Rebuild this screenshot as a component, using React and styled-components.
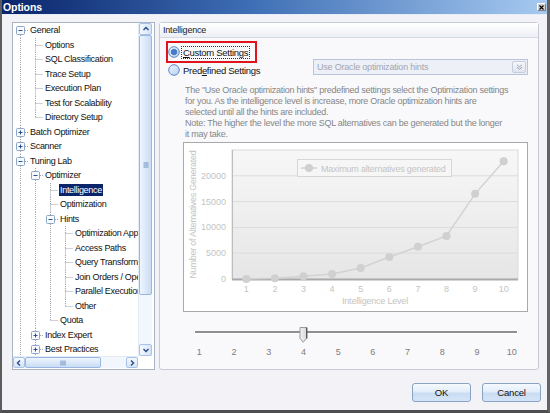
import React from 'react';
import styled, { createGlobalStyle } from 'styled-components';

const GlobalStyle = createGlobalStyle`
  html, body { margin: 0; padding: 0; background: #ffffff; }
  body { font-family: "Liberation Sans", Arial, sans-serif; font-size: 9px; }
  * { box-sizing: border-box; }
`;

const Window = styled.div`
  width: 550px;
  height: 413px;
  display: flex;
  flex-direction: column;
  background: #f3f3f7;
  border-left: 2px solid #5c5c5c;
  border-right: 3px solid #626262;
  border-bottom: 3px solid #4e4e4e;
  overflow: hidden;
`;

const TitleBar = styled.div`
  height: 15px;
  flex: none;
  display: flex;
  align-items: center;
  padding-left: 1px;
  background: linear-gradient(to right, #0a246a 0%, #3d6db4 45%, #a6caf0 100%);
  border-bottom: 1px solid #e8eef8;
`;

const TitleText = styled.span`
  color: #ffffff;
  font-weight: bold;
  font-size: 10.5px;
  letter-spacing: -0.1px;
`;

const CloseBox = styled.div`
  margin-left: auto;
  margin-right: 1px;
  width: 9px;
  height: 8px;
  background: #d4d0c8;
  border: 1px solid #808080;
  border-top-color: #ffffff;
  border-left-color: #ffffff;
  display: flex;
  align-items: center;
  justify-content: center;
`;

const Body = styled.div`
  display: flex;
  gap: 4px;
  padding: 7px 0 0 10px;
`;

const TreePanel = styled.div`
  width: 143px;
  height: 348px;
  border: 1px solid #a9b4c4;
  background: #ffffff;
  display: grid;
  grid-template-columns: 125px 14px;
  grid-template-rows: 333px 12px;
`;

const TreeArea = styled.div`
  overflow: hidden;
  padding-top: 0;
`;

const Row = styled.div`
  height: 14.5px;
  display: flex;
  align-items: center;
  white-space: nowrap;
`;

const Cell = styled.svg`
  flex: none;
  display: block;
`;

const NodeLabel = styled.span`
  margin-left: 1px;
  padding: 0 1px;
  line-height: 12px;
  font-size: 9px;
  letter-spacing: -0.3px;
  color: ${p => (p.$selected ? '#ffffff' : '#111111')};
  background: ${p => (p.$selected ? '#0a246a' : 'transparent')};
`;

const VScroll = styled.div`
  display: flex;
  flex-direction: column;
  background: #f2f7fd;
  border-left: 1px solid #e2ebf6;
`;

const HScroll = styled.div`
  display: flex;
  background: #f2f7fd;
  border-top: 1px solid #e2ebf6;
`;

const ArrowBtn = styled.div`
  flex: none;
  width: ${p => (p.$horizontal ? '12px' : '100%')};
  height: ${p => (p.$horizontal ? '100%' : '12px')};
  display: flex;
  align-items: center;
  justify-content: center;
  border: 1px solid #a9c3e6;
  border-radius: 2px;
  background: linear-gradient(${p => (p.$horizontal ? '180deg' : '90deg')}, #f4f9ff, #d3e4f8);
`;

const Track = styled.div`
  flex: 1;
  display: flex;
  flex-direction: ${p => (p.$horizontal ? 'row' : 'column')};
`;

const Thumb = styled.div`
  flex: none;
  display: flex;
  align-items: center;
  justify-content: center;
  border: 1px solid #9ab8df;
  border-radius: 2px;
  background: linear-gradient(${p => (p.$horizontal ? '180deg' : '90deg')}, #eef5fd, #c9ddf5);
`;

const Corner = styled.div`
  background: #ffffff;
`;

const RightPanel = styled.div`
  width: 380px;
  height: 348px;
  border: 1px solid #c6cbd7;
  border-radius: 3px;
  background: #f9f9fc;
  display: flex;
  flex-direction: column;
`;

const PanelHeader = styled.div`
  height: 15px;
  flex: none;
  padding-left: 3px;
  display: flex;
  align-items: center;
  font-size: 9px;
  letter-spacing: -0.2px;
  color: #222;
  background: linear-gradient(#ffffff, #eceff5);
  border-bottom: 1px solid #d6dae3;
`;

const OptionsRow = styled.div`
  display: flex;
  align-items: flex-start;
`;

const RadioColumn = styled.div`
  display: flex;
  flex-direction: column;
`;

const HighlightBox = styled.div`
  margin: 3px 0 0 6px;
  width: 91px;
  height: 22px;
  border: 2px solid #e0141c;
  display: flex;
  align-items: center;
`;

const RadioRow = styled.div`
  display: flex;
  align-items: center;
  height: 14px;
  margin-left: ${p => p.$indent || 0}px;
`;

const RadioLabel = styled.span`
  margin-left: 1px;
  padding: 0 1px;
  line-height: 11px;
  font-size: 9.5px;
  letter-spacing: -0.3px;
  color: #111;
  border: 1px dotted ${p => (p.$focus ? '#333' : 'transparent')};
  u { text-decoration: underline; }
`;

const Dropdown = styled.div`
  margin: 21px 10px 0 auto;
  width: 215px;
  height: 16px;
  border: 1px solid #b9c4db;
  background: #edf0f7;
  display: flex;
  align-items: center;
  padding-left: 3px;
  color: #a2a6b0;
  font-size: 9px;
  letter-spacing: -0.2px;
`;

const DropButton = styled.div`
  margin-left: auto;
  margin-right: 1px;
  width: 14px;
  height: 12px;
  border: 1px solid #c5cddd;
  border-radius: 2px;
  background: linear-gradient(#f6f7fb, #dfe4ee);
  display: flex;
  align-items: center;
  justify-content: center;
`;

const Description = styled.p`
  margin: 8px 0 0 25px;
  font-size: 9px;
  line-height: 11px;
  letter-spacing: -0.27px;
  color: #868686;
  white-space: nowrap;
`;

const ChartBox = styled.div`
  margin: 2px 0 0 23px;
  width: 345px;
  height: 170px;
  border: 1px solid #a9a9a9;
  background: #ffffff;
  flex: none;
`;

const SliderArea = styled.div`
  margin: 19px 0 0 35px;
  width: 322px;
  height: 3px;
  position: relative;
  border-top: 2px solid #8f8f8f;
  border-bottom: 1px solid #ffffff;
`;

const SliderThumb = styled.svg`
  position: absolute;
  top: -6px;
`;

const TickLabels = styled.div`
  margin: 13px 0 0 22px;
  width: 347px;
  display: grid;
  grid-template-columns: repeat(10, 1fr);
  font-size: 9px;
  line-height: 10px;
  color: #7c7c7c;
  text-align: center;
`;

const Footer = styled.div`
  display: flex;
  justify-content: flex-end;
  gap: 11px;
  padding: 13px 6px 0 0;
`;

const Button = styled.button`
  width: 59px;
  height: 19px;
  border: 1px solid #8aa2c3;
  border-radius: 3px;
  background: linear-gradient(#f6f9fe 0%, #e3edf9 45%, #c9dcf2 55%, #d5e5f7 100%);
  font-family: "Liberation Sans", Arial, sans-serif;
  font-size: 9.5px;
  letter-spacing: -0.2px;
  color: #111;
  padding: 0;
`;

/* ---------- tree ---------- */

const tree = [
  {
    label: 'General', open: true, children: [
      { label: 'Options' }, { label: 'SQL Classification' }, { label: 'Trace Setup' },
      { label: 'Execution Plan' }, { label: 'Test for Scalability' }, { label: 'Directory Setup' },
    ],
  },
  { label: 'Batch Optimizer', closed: true },
  { label: 'Scanner', closed: true },
  {
    label: 'Tuning Lab', open: true, more: true, children: [
      {
        label: 'Optimizer', open: true, children: [
          { label: 'Intelligence', selected: true },
          { label: 'Optimization' },
          {
            label: 'Hints', open: true, children: [
              { label: 'Optimization Approach' }, { label: 'Access Paths' },
              { label: 'Query Transformation' }, { label: 'Join Orders / Operations' },
              { label: 'Parallel Execution' }, { label: 'Other' },
            ],
          },
          { label: 'Quota' },
        ],
      },
      { label: 'Index Expert', closed: true },
      { label: 'Best Practices', closed: true, more: true },
    ],
  },
];

function flatten(nodes, depth = 0, guides = [], out = []) {
  nodes.forEach((n, i) => {
    const hasNext = i < nodes.length - 1 || !!n.more;
    out.push({ ...n, depth, guides, hasNext, first: out.length === 0 });
    if (n.children && n.open) flatten(n.children, depth + 1, [...guides, hasNext], out);
  });
  return out;
}

const LINE = { stroke: '#9ea3ad', strokeWidth: 1, strokeDasharray: '1 1' };

const Guide = ({ on }) => (
  <Cell width="15" height="14.5" viewBox="0 0 15 14.5">
    {on && <line x1="7.5" y1="0" x2="7.5" y2="14.5" {...LINE} />}
  </Cell>
);

const Connector = ({ first, hasNext, expandable, open }) => (
  <Cell width="15" height="14.5" viewBox="0 0 15 14.5">
    {!first && <line x1="7.5" y1="0" x2="7.5" y2={expandable ? 3 : 7.5} {...LINE} />}
    {hasNext && <line x1="7.5" y1={expandable ? 12 : 7.5} x2="7.5" y2="14.5" {...LINE} />}
    <line x1={expandable ? 12 : 7.5} y1="7.5" x2="15" y2="7.5" {...LINE} />
    {expandable && (
      <g>
        <rect x="3.5" y="3.5" width="8" height="8" rx="1" fill="#f7f9fc" stroke="#8ea6c6" />
        <line x1="5.5" y1="7.5" x2="9.5" y2="7.5" stroke="#2c4f8e" />
        {!open && <line x1="7.5" y1="5.5" x2="7.5" y2="9.5" stroke="#2c4f8e" />}
      </g>
    )}
  </Cell>
);

const Chevron = ({ dir }) => {
  const paths = {
    up: 'M1.5 5 L4 2.5 L6.5 5',
    down: 'M1.5 3 L4 5.5 L6.5 3',
    left: 'M5 1.5 L2.5 4 L5 6.5',
    right: 'M3 1.5 L5.5 4 L3 6.5',
  };
  return (
    <svg width="8" height="8" viewBox="0 0 8 8">
      <path d={paths[dir]} fill="none" stroke="#2b4a86" strokeWidth="1.4" />
    </svg>
  );
};

const Grip = ({ horizontal }) => (
  <svg width="6" height="6" viewBox="0 0 6 6">
    {horizontal
      ? [1, 3, 5].map(x => <line key={x} x1={x} y1="0.5" x2={x} y2="5.5" stroke="#6f8fbf" />)
      : [1, 3, 5].map(y => <line key={y} x1="0.5" y1={y} x2="5.5" y2={y} stroke="#6f8fbf" />)}
  </svg>
);

function Tree() {
  const rows = flatten(tree);
  return (
    <TreeArea>
      {rows.map((r, idx) => (
        <Row key={idx}>
          {r.guides.map((g, gi) => <Guide key={gi} on={g} />)}
          <Connector first={r.first} hasNext={r.hasNext} expandable={!!(r.children || r.closed)} open={r.open} />
          <NodeLabel $selected={r.selected}>{r.label}</NodeLabel>
        </Row>
      ))}
    </TreeArea>
  );
}

/* ---------- radio ---------- */

const Radio = ({ checked }) => (
  <svg width="12" height="12" viewBox="0 0 12 12">
    <defs>
      <linearGradient id={checked ? 'rg1' : 'rg2'} x1="0" y1="0" x2="1" y2="1">
        <stop offset="0" stopColor="#eef4fc" />
        <stop offset="1" stopColor="#b7cfee" />
      </linearGradient>
    </defs>
    <circle cx="6" cy="6" r="5.3" fill={`url(#${checked ? 'rg1' : 'rg2'})`} stroke="#5d88c4" strokeWidth="1" />
    {checked && <circle cx="6" cy="6" r="2.8" fill="#3f7cd0" stroke="#2e62ad" strokeWidth="0.6" />}
  </svg>
);

/* ---------- chart ---------- */

function Chart() {
  const L = 48, R = 334, T = 7, B = 136, max = 25000;
  const data = [0, 150, 550, 950, 2150, 4250, 6250, 8350, 16500, 22800];
  const cw = (R - L) / 10;
  const x = i => L + (i + 0.5) * cw;
  const y = v => B - (v / max) * (B - T);
  const ticks = [0, 5000, 10000, 15000, 20000];
  const txt = { fontFamily: '"Liberation Sans", Arial, sans-serif', fontSize: 9, fill: '#c4c4c4' };
  return (
    <svg width="343" height="168" viewBox="0 0 343 168">
      <defs>
        <linearGradient id="plotbg" x1="0" y1="0" x2="0" y2="1">
          <stop offset="0" stopColor="#f7f7f7" />
          <stop offset="1" stopColor="#e6e6e6" />
        </linearGradient>
      </defs>
      <rect x={L} y={T} width={R - L} height={B - T} fill="url(#plotbg)" stroke="#dadada" />
      {ticks.slice(1).map(t => (
        <line key={t} x1={L} y1={y(t)} x2={R} y2={y(t)} stroke="#dcdcdc" />
      ))}
      <line x1={L + 0.5} y1={T} x2={L + 0.5} y2={B} stroke="#bdbdbd" />
      <line x1={L} y1={B + 0.5} x2={R} y2={B + 0.5} stroke="#a9a9a9" strokeWidth="2" />
      {ticks.map(t => (
        <text key={t} x="42" y={y(t) + 3} textAnchor="end" {...txt}>{t}</text>
      ))}
      {data.map((_, i) => (
        <text key={i} x={x(i)} y="149" textAnchor="middle" {...txt}>{i + 1}</text>
      ))}
      <text x={(L + R) / 2} y="161" textAnchor="middle" {...txt} letterSpacing="-0.2">Intelligence Level</text>
      <text x="0" y="0" transform={`translate(12 ${(T + B) / 2}) rotate(-90)`} textAnchor="middle" {...txt} letterSpacing="-0.25">
        Number of Alternatives Generated
      </text>
      <polyline points={data.map((v, i) => `${x(i)},${y(v)}`).join(' ')} fill="none" stroke="#d2d2d2" strokeWidth="1.5" />
      {data.map((v, i) => (
        <circle key={i} cx={x(i)} cy={y(v)} r="4" fill="#d0d0d0" />
      ))}
      <rect x="113.5" y="16.5" width="154" height="17" fill="#f6f6f6" stroke="#d6d6d6" />
      <line x1="117" y1="25" x2="133" y2="25" stroke="#d2d2d2" strokeWidth="1.5" />
      <circle cx="125" cy="25" r="4" fill="#d0d0d0" />
      <text x="137" y="28.5" {...txt} letterSpacing="-0.2">Maximum alternatives generated</text>
    </svg>
  );
}

export default function App() {
  const sliderValue = 4;
  const thumbLeft = 4 + (sliderValue - 1) * 34.7 - 4;
  return (
    <>
      <GlobalStyle />
      <Window>
        <TitleBar>
          <TitleText>Options</TitleText>
          <CloseBox>
            <svg width="5" height="5" viewBox="0 0 5 5">
              <path d="M0.5 0.5 L4.5 4.5 M4.5 0.5 L0.5 4.5" stroke="#000" strokeWidth="1.1" />
            </svg>
          </CloseBox>
        </TitleBar>
        <Body>
          <TreePanel>
            <Tree />
            <VScroll>
              <ArrowBtn><Chevron dir="up" /></ArrowBtn>
              <Track>
                <Thumb style={{ height: 260 }}><Grip /></Thumb>
              </Track>
              <ArrowBtn><Chevron dir="down" /></ArrowBtn>
            </VScroll>
            <HScroll>
              <ArrowBtn $horizontal><Chevron dir="left" /></ArrowBtn>
              <Track $horizontal>
                <Thumb $horizontal style={{ width: 76 }}><Grip horizontal /></Thumb>
              </Track>
              <ArrowBtn $horizontal><Chevron dir="right" /></ArrowBtn>
            </HScroll>
            <Corner />
          </TreePanel>
          <RightPanel>
            <PanelHeader>Intelligence</PanelHeader>
            <OptionsRow>
              <RadioColumn>
                <HighlightBox>
                  <Radio checked />
                  <RadioLabel $focus><u>C</u>ustom Settings</RadioLabel>
                </HighlightBox>
                <RadioRow $indent={8}>
                  <Radio />
                  <RadioLabel>Pred<u>e</u>fined Settings</RadioLabel>
                </RadioRow>
              </RadioColumn>
              <Dropdown>
                Use Oracle optimization hints
                <DropButton>
                  <svg width="7" height="6" viewBox="0 0 7 6">
                    <path d="M1 0.8 L3.5 2.8 L6 0.8 M1 3.2 L3.5 5.2 L6 3.2" fill="none" stroke="#9aa3b5" strokeWidth="1" />
                  </svg>
                </DropButton>
              </Dropdown>
            </OptionsRow>
            <Description>
              The "Use Oracle optimization hints" predefined settings select the Optimization settings<br />
              for you. As the intelligence level is increase, more Oracle optimization hints are<br />
              selected until all the hints are included.<br />
              Note: The higher the level the more SQL alternatives can be generated but the longer<br />
              it may take.
            </Description>
            <ChartBox>
              <Chart />
            </ChartBox>
            <SliderArea>
              <SliderThumb width="9" height="16" viewBox="0 0 9 16" style={{ left: thumbLeft }}>
                <defs>
                  <linearGradient id="thumbg" x1="0" y1="0" x2="1" y2="0">
                    <stop offset="0" stopColor="#f4f4f4" />
                    <stop offset="1" stopColor="#d6d6d6" />
                  </linearGradient>
                </defs>
                <path d="M1 0.5 H7.5 V11.5 L4.2 15.3 L1 11.5 Z" fill="url(#thumbg)" stroke="#9a9a9a" />
                <line x1="7.8" y1="0.5" x2="7.8" y2="11.5" stroke="#4a4a4a" strokeWidth="1.2" />
              </SliderThumb>
            </SliderArea>
            <TickLabels>
              {Array.from({ length: 10 }, (_, i) => <span key={i}>{i + 1}</span>)}
            </TickLabels>
          </RightPanel>
        </Body>
        <Footer>
          <Button>OK</Button>
          <Button>Cancel</Button>
        </Footer>
      </Window>
    </>
  );
}
